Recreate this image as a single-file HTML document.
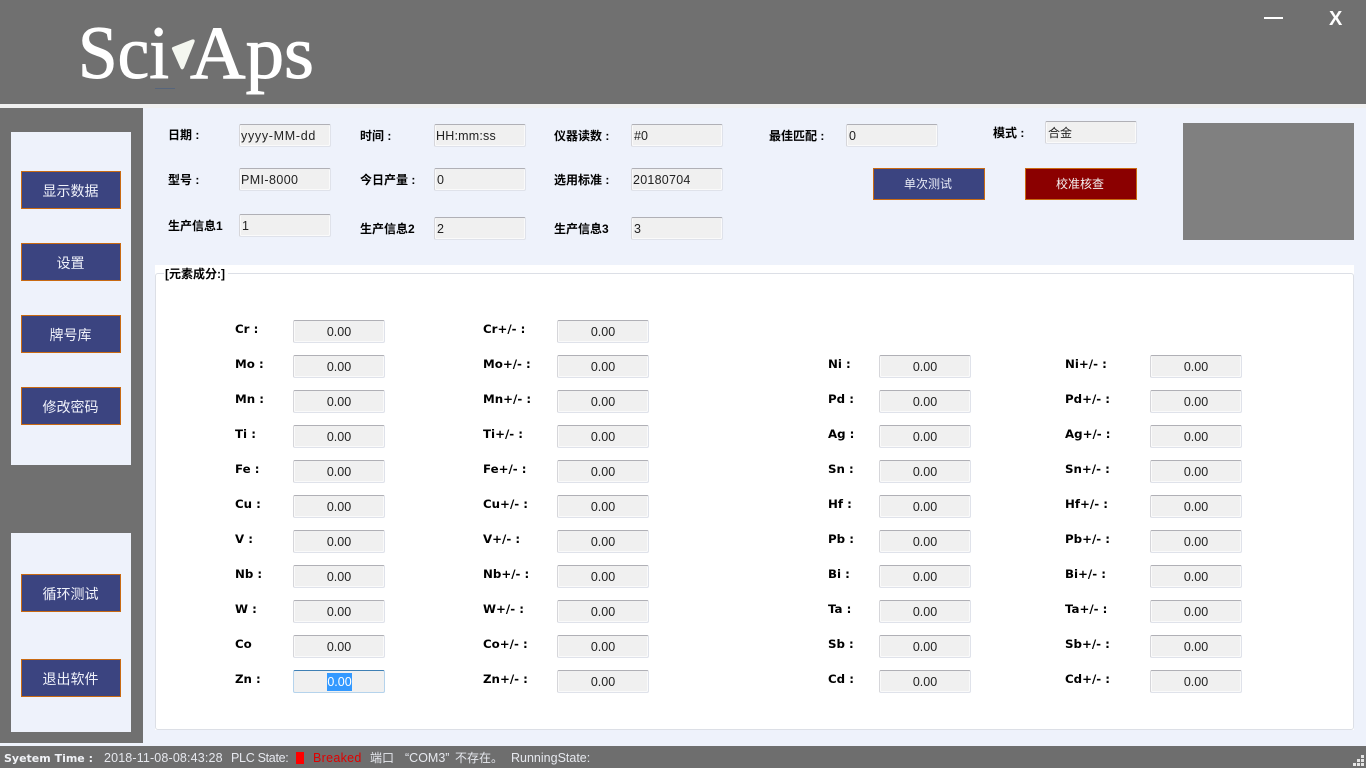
<!DOCTYPE html>
<html lang="zh">
<head>
<meta charset="utf-8">
<title>SciAps</title>
<style>
html,body{margin:0;padding:0;width:1366px;height:768px;overflow:hidden;background:#eef2fb}
body{position:relative;font-family:"Liberation Sans","Noto Sans CJK SC",sans-serif;font-size:12.5px;color:#000}
div,b,i,span{position:absolute;display:block;font-style:normal;white-space:nowrap}
.box{box-sizing:border-box;width:92px;height:23px;background:#f0f0f0;border:1px solid #dfe2ea;border-top-color:#b0b0b6;border-left-color:#d6d6da;border-radius:2px;box-shadow:inset -1px -1px 0 #fafafa,inset 1px 0 0 #fafafa;line-height:23px;padding-left:2px;color:#222}
.num{text-align:center;padding:0;line-height:22px;font-size:12.5px}
.t{font-family:"DejaVu Sans","Noto Sans CJK SC",sans-serif;font-weight:bold;line-height:16px;font-size:11.8px;color:#000;margin-top:1px}
.u{font-family:"Liberation Sans","Noto Sans CJK SC",sans-serif;font-weight:bold;line-height:16px;font-size:12px;color:#000}
.btn{box-sizing:border-box;width:100px;height:38px;left:21px;background:#3b4480;border:1px solid #c96a12;color:#f0f2fa;text-align:center;line-height:39px;padding-right:1px;font-size:14px}
.r{left:0;width:1366px;height:23px}
.a{left:235px}.b{left:293px}.c{left:483px}.d{left:557px}.e{left:828px}.f{left:879px}.g{left:1065px}.h{left:1150px}
.st{top:747px;line-height:23px;color:#e6e8ee;font-size:12.5px}
.cj{font-size:12px}
</style>
</head>
<body>
<div style="left:0;top:0;width:1366px;height:104px;background:#707070"></div>
<div style="left:0;top:104px;width:1366px;height:4px;background:#f0f0f0"></div>
<svg style="position:absolute;left:0;top:0" width="400" height="104" viewBox="0 0 400 104">
<text x="78" y="78" font-family="Liberation Serif" font-size="75" fill="#fff" stroke="#fff" stroke-width="1" textLength="91" lengthAdjust="spacingAndGlyphs">Sci</text>
<path d="M173 47 L192 39.5 Q195.500 39 194.500 42 L184 68 Q182 71 180.500 68 L172 49 Q171.500 47.500 173 47Z" fill="#f4f7f0"/>
<text x="190" y="78" font-family="Liberation Serif" font-size="75" fill="#fff" stroke="#fff" stroke-width="1" textLength="124" lengthAdjust="spacingAndGlyphs">Aps</text>
<rect x="155" y="88" width="20" height="1" fill="#56657c"/>
</svg>
<div style="left:1264px;top:17px;width:19px;height:2px;background:#fff"></div>
<div style="left:1329px;top:6px;line-height:26px;font-size:20px;font-weight:bold;color:#fff">X</div>

<div style="left:0;top:108px;width:143px;height:635px;background:#707070"></div>
<div style="left:11px;top:132px;width:120px;height:333px;background:#eef2fb"></div>
<div style="left:11px;top:533px;width:120px;height:199px;background:#eef2fb"></div>
<div class="btn" style="top:171px">显示数据</div>
<div class="btn" style="top:243px">设置</div>
<div class="btn" style="top:315px">牌号库</div>
<div class="btn" style="top:387px">修改密码</div>
<div class="btn" style="top:574px">循环测试</div>
<div class="btn" style="top:659px">退出软件</div>

<b class="u" style="left:168px;top:127px">日期 :</b><div class="box" style="left:239px;top:124px;padding-left:1px;letter-spacing:.7px">yyyy-MM-dd</div>
<b class="u" style="left:360px;top:128px">时间 :</b><div class="box" style="left:434px;top:124px;padding-left:1px;letter-spacing:.2px">HH:mm:ss</div>
<b class="u" style="left:554px;top:128px">仪器读数 :</b><div class="box" style="left:631px;top:124px">#0</div>
<b class="u" style="left:769px;top:128px">最佳匹配 :</b><div class="box" style="left:846px;top:124px">0</div>
<b class="u" style="left:993px;top:125px">模式 :</b><div class="box cj" style="left:1045px;top:121px">合金</div>
<b class="u" style="left:168px;top:172px">型号 :</b><div class="box" style="left:239px;top:168px;padding-left:1px;letter-spacing:.4px">PMI-8000</div>
<b class="u" style="left:360px;top:172px">今日产量 :</b><div class="box" style="left:434px;top:168px">0</div>
<b class="u" style="left:554px;top:172px">选用标准 :</b><div class="box" style="left:631px;top:168px;padding-left:1px;letter-spacing:.25px">20180704</div>
<b class="u" style="left:168px;top:218px">生产信息1</b><div class="box" style="left:239px;top:214px">1</div>
<b class="u" style="left:360px;top:221px">生产信息2</b><div class="box" style="left:434px;top:217px">2</div>
<b class="u" style="left:554px;top:221px">生产信息3</b><div class="box" style="left:631px;top:217px">3</div>
<div style="box-sizing:border-box;left:873px;top:168px;width:112px;height:32px;background:#3b4480;border:1px solid #c96a12;color:#e8ebf6;text-align:center;line-height:30px;padding-right:2px;font-size:12px">单次测试</div>
<div style="box-sizing:border-box;left:1025px;top:168px;width:112px;height:32px;background:#8b0000;border:1px solid #c96a12;color:#f4f0f0;text-align:center;line-height:30px;padding-right:2px;font-size:12px">校准核查</div>
<div style="left:1183px;top:123px;width:171px;height:117px;background:#808080"></div>

<div style="left:155px;top:265px;width:1199px;height:465px;background:#fff"></div>
<div style="box-sizing:border-box;left:155px;top:273px;width:1199px;height:457px;border:1px solid #dcdfe6;border-radius:3px"></div>
<b class="u" style="left:164px;top:266px;background:#fff;padding:0 3px 0 1px">[元素成分:]</b>

<div class="r" style="top:320px"><b class="t a">Cr :</b><div class="box num b">0.00</div><b class="t c">Cr+/- :</b><div class="box num d">0.00</div></div>
<div class="r" style="top:355px"><b class="t a">Mo :</b><div class="box num b">0.00</div><b class="t c">Mo+/- :</b><div class="box num d">0.00</div><b class="t e">Ni :</b><div class="box num f">0.00</div><b class="t g">Ni+/- :</b><div class="box num h">0.00</div></div>
<div class="r" style="top:390px"><b class="t a">Mn :</b><div class="box num b">0.00</div><b class="t c">Mn+/- :</b><div class="box num d">0.00</div><b class="t e">Pd :</b><div class="box num f">0.00</div><b class="t g">Pd+/- :</b><div class="box num h">0.00</div></div>
<div class="r" style="top:425px"><b class="t a">Ti :</b><div class="box num b">0.00</div><b class="t c">Ti+/- :</b><div class="box num d">0.00</div><b class="t e">Ag :</b><div class="box num f">0.00</div><b class="t g">Ag+/- :</b><div class="box num h">0.00</div></div>
<div class="r" style="top:460px"><b class="t a">Fe :</b><div class="box num b">0.00</div><b class="t c">Fe+/- :</b><div class="box num d">0.00</div><b class="t e">Sn :</b><div class="box num f">0.00</div><b class="t g">Sn+/- :</b><div class="box num h">0.00</div></div>
<div class="r" style="top:495px"><b class="t a">Cu :</b><div class="box num b">0.00</div><b class="t c">Cu+/- :</b><div class="box num d">0.00</div><b class="t e">Hf :</b><div class="box num f">0.00</div><b class="t g">Hf+/- :</b><div class="box num h">0.00</div></div>
<div class="r" style="top:530px"><b class="t a">V :</b><div class="box num b">0.00</div><b class="t c">V+/- :</b><div class="box num d">0.00</div><b class="t e">Pb :</b><div class="box num f">0.00</div><b class="t g">Pb+/- :</b><div class="box num h">0.00</div></div>
<div class="r" style="top:565px"><b class="t a">Nb :</b><div class="box num b">0.00</div><b class="t c">Nb+/- :</b><div class="box num d">0.00</div><b class="t e">Bi :</b><div class="box num f">0.00</div><b class="t g">Bi+/- :</b><div class="box num h">0.00</div></div>
<div class="r" style="top:600px"><b class="t a">W :</b><div class="box num b">0.00</div><b class="t c">W+/- :</b><div class="box num d">0.00</div><b class="t e">Ta :</b><div class="box num f">0.00</div><b class="t g">Ta+/- :</b><div class="box num h">0.00</div></div>
<div class="r" style="top:635px"><b class="t a">Co</b><div class="box num b">0.00</div><b class="t c">Co+/- :</b><div class="box num d">0.00</div><b class="t e">Sb :</b><div class="box num f">0.00</div><b class="t g">Sb+/- :</b><div class="box num h">0.00</div></div>
<div class="r" style="top:670px"><b class="t a">Zn :</b><div class="box num b" style="border:1px solid #b5d3ec;border-top:1px solid #3f80b5;box-shadow:none"><span style="left:33px;top:2px;width:25px;height:18px;line-height:18px;background:#3399ff;color:#fff">0.00</span></div><b class="t c">Zn+/- :</b><div class="box num d">0.00</div><b class="t e">Cd :</b><div class="box num f">0.00</div><b class="t g">Cd+/- :</b><div class="box num h">0.00</div></div>

<div style="left:0;top:746px;width:1366px;height:22px;background:#6e6e6e"></div>
<b class="st" style="left:4px;font-family:'DejaVu Sans',sans-serif;font-size:11px;font-weight:bold;color:#f0f2f6">Syetem Time :</b>
<span class="st" style="left:104px;letter-spacing:.15px">2018-11-08-08:43:28</span>
<span class="st" style="left:231px;letter-spacing:-.3px">PLC State:</span>
<div style="left:296px;top:752px;width:8px;height:12px;background:#ff0000"></div>
<span class="st" style="left:313px;color:#e00000;letter-spacing:.3px">Breaked</span>
<span class="st cj" style="left:370px">端口</span>
<span class="st" style="left:405px">“COM3”</span>
<span class="st cj" style="left:455px">不存在。</span>
<span class="st" style="left:511px">RunningState:</span>
<svg style="position:absolute;left:1353px;top:754px" width="13" height="14" fill="#e4e4e4">
<rect x="8" y="1" width="3" height="3"/>
<rect x="4" y="5" width="3" height="3"/><rect x="8" y="5" width="3" height="3"/>
<rect x="0" y="9" width="3" height="3"/><rect x="4" y="9" width="3" height="3"/><rect x="8" y="9" width="3" height="3"/>
</svg>
</body>
</html>
